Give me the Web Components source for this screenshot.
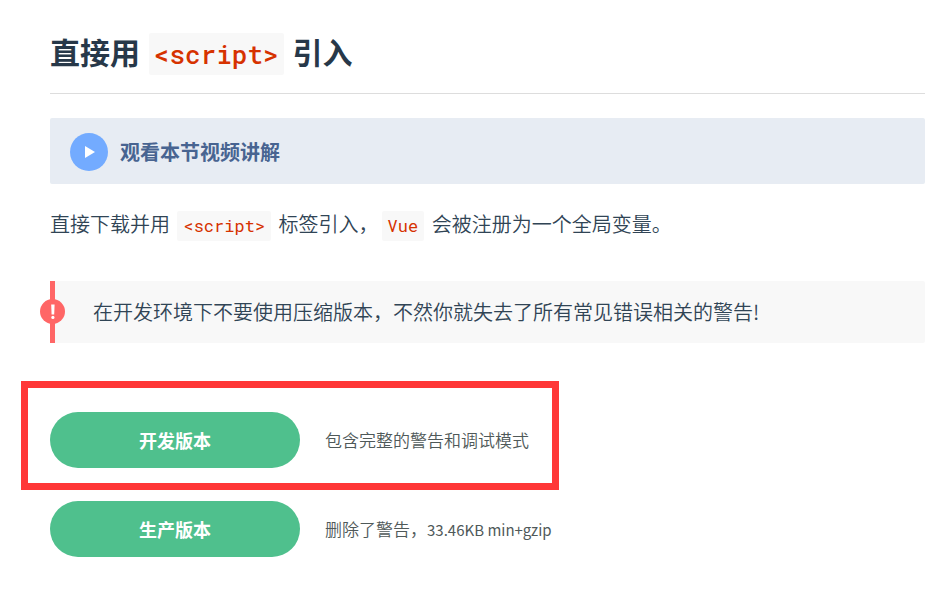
<!DOCTYPE html>
<html lang="zh-CN">
<head>
<meta charset="utf-8">
<title>直接用 &lt;script&gt; 引入</title>
<style>
body {
  margin: 0;
  background: #fff;
  color: #304455;
  font-family: "Noto Sans CJK SC", sans-serif;
  font-size: 20px;
  font-weight: 350;
  line-height: 32px;
}
</style>
</head>
<body>

<template id="guide-section-template">
  <style>
    :host {
      display: block;
      padding: 29px 22px 32px 50px;
    }
    h2 {
      margin: 0 0 24px;
      padding-bottom: 18px;
      border-bottom: 1px solid #ddd;
      color: #273849;
      font-size: 30px;
      line-height: 44px;
      font-weight: 700;
    }
  </style>
  <h2><slot name="title"></slot></h2>
  <slot></slot>
</template>

<template id="inline-code-template">
  <style>
    :host {
      display: inline-block;
      margin: 0 3px;
      padding: 0 6px;
      border-radius: 2px;
      background: #f8f8f8;
      color: #d63200;
      font-family: "Roboto Mono", "Liberation Mono", monospace;
      font-size: 17px;
      font-weight: 400;
      line-height: 30px;
    }
    :host([large]) {
      margin: 0 2px;
      padding: 0 5px;
      font-size: 26px;
      font-weight: 500;
      line-height: 42px;
    }
    code { font: inherit; }
  </style>
  <code><slot></slot></code>
</template>

<template id="video-lesson-template">
  <style>
    :host { display: block; }
    a {
      display: flex;
      align-items: center;
      gap: 12px;
      padding: 15px 20px 13px;
      border-radius: 2px;
      background: #e7ecf3;
      color: #486491;
      font-weight: 700;
      text-decoration: none;
    }
    svg { display: block; width: 38px; height: 38px; }
  </style>
  <a href="#">
    <svg viewBox="0 0 38 38" aria-hidden="true">
      <circle cx="19" cy="19" r="19" fill="#73abff"/>
      <path d="M15 13v12l10-6z" fill="#fff"/>
    </svg>
    <slot></slot>
  </a>
</template>

<template id="warning-tip-template">
  <style>
    :host {
      display: block;
      position: relative;
      padding: 15px 38px;
      border-left: 5px solid #f66;
      border-radius: 0 2px 2px 0;
      background: #f8f8f8;
    }
    svg {
      position: absolute;
      top: calc(50% - 13px);
      left: -15px;
      width: 25px;
      height: 25px;
    }
  </style>
  <svg viewBox="0 0 25 25" aria-hidden="true">
    <circle cx="12.5" cy="12.5" r="12.5" fill="#f66"/>
    <path d="M11.2 5.5h3.4l-.4 10h-2.6z" fill="#fff"/>
    <circle cx="12.9" cy="18.4" r="1.6" fill="#fff"/>
  </svg>
  <slot></slot>
</template>

<template id="download-option-template">
  <style>
    :host {
      display: flex;
      position: relative;
      align-items: center;
      gap: 25px;
      width: fit-content;
    }
    /* marker frame around the recommended build */
    :host([marked])::before {
      content: "";
      position: absolute;
      inset: -31px -30px -22px -29px;
      border: 7px solid #ff3737;
      pointer-events: none;
    }
    a {
      box-sizing: border-box;
      width: 250px;
      padding: 12px;
      border-radius: 29px;
      background: #4fc08d;
      color: #fff;
      font-size: 18px;
      font-weight: 700;
      text-align: center;
      text-decoration: none;
    }
    span {
      color: #4f5959;
      font-size: 17px;
    }
    ::slotted(small) {
      font-size: 15px;
      font-weight: 400;
    }
  </style>
  <a href="#"><slot></slot></a>
  <span><slot name="note"></slot><slot name="size"></slot></span>
</template>

<template id="download-list-template">
  <style>
    :host {
      display: grid;
      gap: 33px;
      margin-top: 69px;
    }
  </style>
  <slot></slot>
</template>

<template id="guide-text-template">
  <style>
    :host { display: block; margin: 24px 0 40px; }
    p { margin: 0; }
  </style>
  <p><slot></slot></p>
</template>

<script>
// Each element clones the template named after it
class TemplateElement extends HTMLElement {
  constructor() {
    super();
    const template = document.getElementById(`${this.localName}-template`);
    this.attachShadow({ mode: 'open' }).appendChild(template.content.cloneNode(true));
  }
}

customElements.define('guide-section', class extends TemplateElement {});
customElements.define('guide-text', class extends TemplateElement {});
customElements.define('inline-code', class extends TemplateElement {});
customElements.define('video-lesson', class extends TemplateElement {});
customElements.define('warning-tip', class extends TemplateElement {});
customElements.define('download-list', class extends TemplateElement {});
customElements.define('download-option', class extends TemplateElement {});
</script>

<guide-section>
  <span slot="title">直接用 <inline-code large>&lt;script&gt;</inline-code> 引入</span>
  <video-lesson>观看本节视频讲解</video-lesson>
  <guide-text>直接下载并用 <inline-code>&lt;script&gt;</inline-code> 标签引入，<inline-code>Vue</inline-code> 会被注册为一个全局变量。</guide-text>
  <warning-tip>在开发环境下不要使用压缩版本，不然你就失去了所有常见错误相关的警告!</warning-tip>
  <download-list>
    <download-option marked>开发版本<span slot="note">包含完整的警告和调试模式</span></download-option>
    <download-option>生产版本<span slot="note">删除了警告，</span><small slot="size">33.46KB min+gzip</small></download-option>
  </download-list>
</guide-section>

</body>
</html>
